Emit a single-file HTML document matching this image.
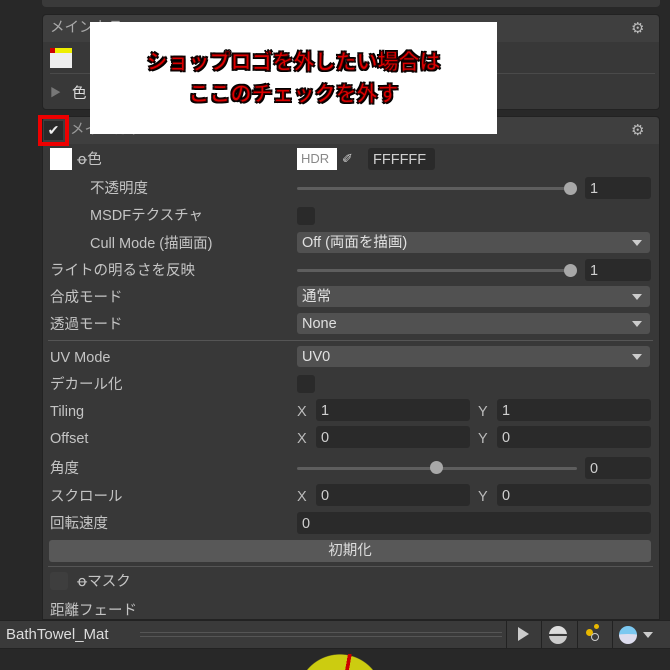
<!DOCTYPE html><html><head><meta charset="utf-8"><style>
*{margin:0;padding:0;box-sizing:border-box}
html{width:670px;height:670px;overflow:hidden}
body{width:670px;height:670px;overflow:hidden;background:#282828;font-family:"Liberation Sans","Noto Sans CJK JP",sans-serif;color:#c4c4c4;font-size:14.5px;position:relative}
.a{position:absolute}
.lbl{position:absolute;left:50px;line-height:20px}
.in{position:absolute;background:#2a2a2a;border-radius:3px;height:22px;line-height:24px;padding-left:5px;color:#d0d0d0}
.dd{position:absolute;left:297px;width:353px;background:#515151;border-radius:3px;height:21px;line-height:23px;padding-left:5px;color:#e0e0e0}
.dd:after{content:"";position:absolute;right:8px;top:8px;border:5px solid transparent;border-top:6px solid #ccc;border-bottom:0}
.sl{position:absolute;height:3px;background:#5e5e5e;border-radius:2px}
.kn{position:absolute;width:13px;height:13px;border-radius:50%;background:#a8a8a8}
.cb{position:absolute;width:18px;height:18px;background:#2a2a2a;border-radius:3px}
.xy{position:absolute;color:#bbb;line-height:20px}
.gear{position:absolute;color:#bbb;font-size:15px}
</style></head><body>
<div class="a" style="left:42px;top:0;width:618px;height:7px;background:#3a3a3a;border-radius:0 0 4px 4px"></div>
<div class="a" style="left:42px;top:14px;width:618px;height:96px;background:#383838;border:1px solid #222;border-radius:4px"></div>
<div class="a" style="left:43px;top:15px;width:616px;height:27px;background:#3f3f3f;border-radius:4px 4px 0 0"></div>
<div class="lbl" style="top:18px;color:#aaa">メインカラー</div>
<div class="gear" style="left:631px;top:19px">⚙</div>
<div class="a" style="left:50px;top:48px;width:22px;height:20px;background:#eee"></div>
<div class="a" style="left:50px;top:48px;width:22px;height:5px;background:#ee0"></div>
<div class="a" style="left:50px;top:48px;width:5px;height:5px;background:#c00"></div>
<div class="a" style="left:50px;top:73px;width:605px;height:1px;background:#4a4a4a"></div>
<div class="a" style="left:50px;top:84px;color:#777;font-size:11px">▶</div>
<div class="a" style="left:72px;top:82px;color:#ddd">色</div>
<div class="a" style="left:42px;top:116px;width:618px;height:504px;background:#383838;border:1px solid #222;border-radius:4px 4px 0 0"></div>
<div class="a" style="left:43px;top:117px;width:616px;height:27px;background:#3f3f3f;border-radius:4px 4px 0 0"></div>
<div class="lbl" style="left:70px;top:120px;color:#999">メインカラー2nd</div>
<div class="gear" style="left:631px;top:121px">⚙</div>
<div class="a" style="left:38px;top:115px;width:31px;height:31px;border:4px solid #e00"></div>
<div class="a" style="left:44px;top:121px;width:19px;height:19px;background:#2a2a2a;color:#eee;font-size:14px;text-align:center;line-height:19px">✔</div>
<div class="a" style="left:50px;top:148px;width:22px;height:22px;background:#fff"></div>
<div class="lbl" style="left:77px;top:150px">ꝋ色</div>
<div class="a" style="left:297px;top:148px;width:40px;height:22px;background:#fff;color:#888;font-size:13px;line-height:22px;padding-left:4px">HDR</div>
<div class="a" style="left:342px;top:151px;color:#ccc;font-size:13px">✐</div>
<div class="in" style="left:368px;top:148px;width:67px">FFFFFF</div>
<div class="lbl" style="left:90px;top:179px">不透明度</div>
<div class="sl" style="left:297px;top:187px;width:276px"></div><div class="kn" style="left:564px;top:182px"></div>
<div class="in" style="left:585px;top:177px;width:66px">1</div>
<div class="lbl" style="left:90px;top:206px">MSDFテクスチャ</div>
<div class="cb" style="left:297px;top:207px"></div>
<div class="lbl" style="left:90px;top:234px">Cull Mode (描画面)</div>
<div class="dd" style="top:232px">Off (両面を描画)</div>
<div class="lbl" style="top:261px">ライトの明るさを反映</div>
<div class="sl" style="left:297px;top:269px;width:276px"></div><div class="kn" style="left:564px;top:264px"></div>
<div class="in" style="left:585px;top:259px;width:66px">1</div>
<div class="lbl" style="top:288px">合成モード</div><div class="dd" style="top:286px">通常</div>
<div class="lbl" style="top:315px">透過モード</div><div class="dd" style="top:313px">None</div>
<div class="a" style="left:48px;top:340px;width:605px;height:1px;background:#555"></div>
<div class="lbl" style="top:348px">UV Mode</div><div class="dd" style="top:346px">UV0</div>
<div class="lbl" style="top:375px">デカール化</div><div class="cb" style="left:297px;top:375px"></div>
<div class="lbl" style="top:402px">Tiling</div>
<div class="xy" style="left:297px;top:402px">X</div><div class="in" style="left:316px;top:399px;width:154px">1</div>
<div class="xy" style="left:478px;top:402px">Y</div><div class="in" style="left:497px;top:399px;width:154px">1</div>
<div class="lbl" style="top:429px">Offset</div>
<div class="xy" style="left:297px;top:429px">X</div><div class="in" style="left:316px;top:426px;width:154px">0</div>
<div class="xy" style="left:478px;top:429px">Y</div><div class="in" style="left:497px;top:426px;width:154px">0</div>
<div class="lbl" style="top:459px">角度</div>
<div class="sl" style="left:297px;top:467px;width:280px"></div><div class="kn" style="left:430px;top:461px"></div>
<div class="in" style="left:585px;top:457px;width:66px">0</div>
<div class="lbl" style="top:487px">スクロール</div>
<div class="xy" style="left:297px;top:487px">X</div><div class="in" style="left:316px;top:484px;width:154px">0</div>
<div class="xy" style="left:478px;top:487px">Y</div><div class="in" style="left:497px;top:484px;width:154px">0</div>
<div class="lbl" style="top:514px">回転速度</div><div class="in" style="left:297px;top:512px;width:354px">0</div>
<div class="a" style="left:49px;top:540px;width:602px;height:22px;background:#585858;border-radius:3px;text-align:center;line-height:22px;color:#ddd">初期化</div>
<div class="a" style="left:48px;top:566px;width:605px;height:1px;background:#555"></div>
<div class="cb" style="left:50px;top:572px;background:#3e3e3e"></div>
<div class="lbl" style="left:77px;top:572px">ꝋマスク</div>
<div class="lbl" style="top:601px">距離フェード</div>
<div class="a" style="left:0;top:620px;width:670px;height:29px;background:#3a3a3a;border-top:1px solid #222;border-bottom:1px solid #222"></div>
<div class="a" style="left:6px;top:626px;color:#ddd;font-size:15px">BathTowel_Mat</div>
<div class="a" style="left:140px;top:632px;width:362px;height:5px;border-top:1px solid #555;border-bottom:1px solid #555"></div>
<div class="a" style="left:506px;top:621px;width:1px;height:28px;background:#222"></div>
<div class="a" style="left:518px;top:627px;border-left:11px solid #ccc;border-top:7px solid transparent;border-bottom:7px solid transparent"></div>
<div class="a" style="left:541px;top:621px;width:1px;height:28px;background:#222"></div>
<div class="a" style="left:549px;top:626px;width:18px;height:18px;border-radius:50%;background:#ccc;border-top:7px solid #ddd"></div>
<div class="a" style="left:549px;top:634px;width:18px;height:2px;background:#3a3a3a"></div>
<div class="a" style="left:577px;top:621px;width:1px;height:28px;background:#222"></div>
<div class="a" style="left:586px;top:629px;width:7px;height:7px;border-radius:50%;background:#e8b800"></div>
<div class="a" style="left:594px;top:624px;width:5px;height:5px;border-radius:50%;background:#e8b800"></div>
<div class="a" style="left:591px;top:633px;width:8px;height:8px;border-radius:50%;border:1px solid #ccc"></div>
<div class="a" style="left:612px;top:621px;width:1px;height:28px;background:#222"></div>
<div class="a" style="left:619px;top:626px;width:18px;height:18px;border-radius:50%;background:#dde;border-top:8px solid #7cc8f0"></div>
<div class="a" style="left:643px;top:632px;border:5px solid transparent;border-top:6px solid #ccc;border-bottom:0"></div>
<div class="a" style="left:290px;top:650px;width:100px;height:20px;background:linear-gradient(100deg,transparent 48%,#c00 48%,#c00 66%,transparent 66%) 48px 4px/18px 16px no-repeat,radial-gradient(circle 43px at 50px 47px,#cccc10 98%,transparent 100%)"></div>
<div class="a" style="left:90px;top:22px;width:407px;height:112px;background:#fff"></div>
<div class="a" style="left:90px;top:47px;width:407px;text-align:center;font-weight:bold;font-size:21px;line-height:32px;color:#d00;-webkit-text-stroke:1px #300;text-shadow:1.5px 1.5px 0 #000,-1.5px 1.5px 0 #000,1.5px -1.5px 0 #000,-1.5px -1.5px 0 #000">ショップロゴを外したい場合は<br>ここのチェックを外す</div>
</body></html>
